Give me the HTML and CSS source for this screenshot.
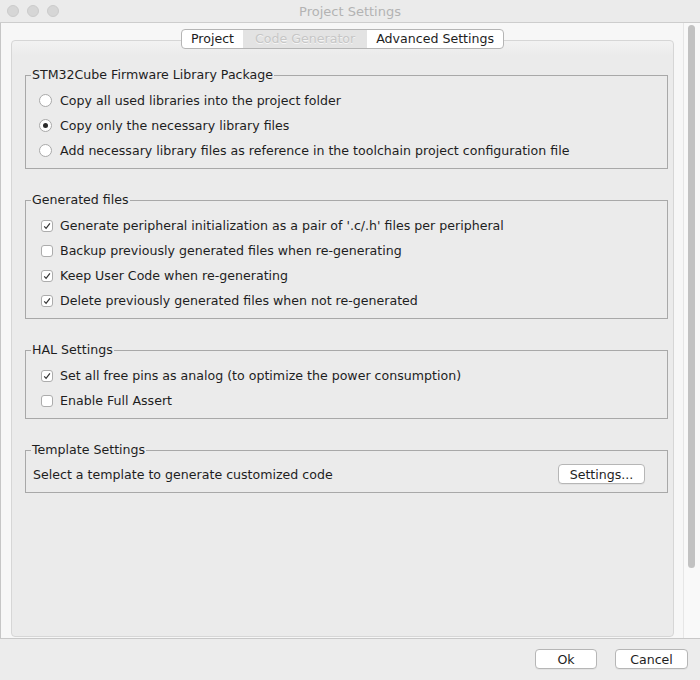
FILE: index.html
```html
<!DOCTYPE html>
<html>
<head>
<meta charset="utf-8">
<title>Project Settings</title>
<link rel="stylesheet" href="styles.css">
</head>
<body>
<div class="window">
  <div class="titlebar">
    <div class="lights"><span class="light"></span><span class="light"></span><span class="light"></span></div>
    <div class="title">Project Settings</div>
    <div></div>
  </div>
  <div class="main">
    <div class="viewport">
      <div class="tabs">
        <div class="tab">Project</div>
        <div class="tab disabled">Code Generator</div>
        <div class="tab">Advanced Settings</div>
      </div>
      <div class="panel">
        <fieldset class="group">
          <legend>STM32Cube Firmware Library Package</legend>
          <div class="row"><span class="ind"><span class="radio"></span></span>Copy all used libraries into the project folder</div>
          <div class="row"><span class="ind"><span class="radio on"></span></span>Copy only the necessary library files</div>
          <div class="row"><span class="ind"><span class="radio"></span></span>Add necessary library files as reference in the toolchain project configuration file</div>
        </fieldset>
        <fieldset class="group">
          <legend>Generated files</legend>
          <div class="row"><span class="ind"><span class="check"><svg viewBox="0 0 12 12" width="12" height="12"><path d="M3.2 6.3 L5.1 8.4 L8.9 3.4"/></svg></span></span>Generate peripheral initialization as a pair of '.c/.h' files per peripheral</div>
          <div class="row"><span class="ind"><span class="check"></span></span>Backup previously generated files when re-generating</div>
          <div class="row"><span class="ind"><span class="check"><svg viewBox="0 0 12 12" width="12" height="12"><path d="M3.2 6.3 L5.1 8.4 L8.9 3.4"/></svg></span></span>Keep User Code when re-generating</div>
          <div class="row"><span class="ind"><span class="check"><svg viewBox="0 0 12 12" width="12" height="12"><path d="M3.2 6.3 L5.1 8.4 L8.9 3.4"/></svg></span></span>Delete previously generated files when not re-generated</div>
        </fieldset>
        <fieldset class="group">
          <legend>HAL Settings</legend>
          <div class="row"><span class="ind"><span class="check"><svg viewBox="0 0 12 12" width="12" height="12"><path d="M3.2 6.3 L5.1 8.4 L8.9 3.4"/></svg></span></span>Set all free pins as analog (to optimize the power consumption)</div>
          <div class="row"><span class="ind"><span class="check"></span></span>Enable Full Assert</div>
        </fieldset>
        <fieldset class="group template">
          <legend>Template Settings</legend>
          <div class="row trow"><span>Select a template to generate customized code</span><button class="btn settings">Settings...</button></div>
        </fieldset>
      </div>
    </div>
    <div class="scrollbar"><div class="thumb"></div></div>
  </div>
  <div class="footer">
    <button class="btn ok">Ok</button>
    <button class="btn cancel">Cancel</button>
  </div>
</div>
</body>
</html>
```
FILE: styles.css
```css
* { box-sizing: border-box; }
html, body { margin: 0; padding: 0; }
body {
  width: 700px;
  height: 680px;
  overflow: hidden;
  background: #ececec;
  font-family: "DejaVu Sans", sans-serif;
  font-size: 12.6px;
  color: #1e1e1e;
}
.window { display: flex; flex-direction: column; height: 680px; }
.titlebar {
  height: 23px;
  flex: none;
  display: grid;
  grid-template-columns: 1fr auto 1fr;
  align-items: center;
  background: #ebebeb;
  border-bottom: 1px solid #cdcdcd;
}
.lights { display: flex; gap: 8px; padding-left: 7px; }
.light {
  width: 12px; height: 12px; border-radius: 50%;
  background: #d6d6d6; border: 1px solid #cbcbcb;
}
.title { color: #b3b3b3; font-size: 13px; }
.main {
  flex: none;
  height: 616px;
  display: flex;
  border-bottom: 1px solid #c8c8c8;
}
.viewport {
  flex: 1;
  display: flex;
  flex-direction: column;
  padding: 6px 9px 1px 10px;
  background: #f7f7f7;
  border-left: 1px solid #c6c6c6;
}
.tabs {
  align-self: center;
  display: flex;
  height: 20px;
  margin-bottom: -9px;
  position: relative;
  z-index: 1;
  background: #fff;
  border: 1px solid #b5b5b5;
  border-radius: 4px;
  overflow: hidden;
}
.tab { padding: 0 9px; line-height: 18px; color: #1e1e1e; }
.tab.disabled {
  padding: 0 12px;
  background: #e3e3e3;
  color: #c6c6c6;
  text-shadow: 0 1px 0 #f6f6f6;
}
.panel {
  flex: 1;
  border: 1px solid #d6d6d6;
  border-radius: 4px;
  background: linear-gradient(#f2f2f2, #ebebeb 14px);
  padding: 26px 5px 0 13px;
}
.group {
  margin: 0;
  min-width: 0;
  padding: 5px 0 5px;
  border: 1px solid #a8a8a8;
}
.group + .group { margin-top: 23px; }
.group legend {
  margin-left: 5px;
  padding: 0 1px;
  line-height: 16px;
}
.row {
  height: 25px;
  display: flex;
  align-items: center;
  gap: 7px;
  padding-left: 13px;
  white-space: nowrap;
}
.ind { width: 14px; display: flex; align-items: center; }
.radio {
  width: 13px; height: 13px; border-radius: 50%;
  background: #fff;
  border: 1px solid #a9a9a9;
  display: flex; align-items: center; justify-content: center;
}
.radio.on::after {
  content: "";
  width: 5px; height: 5px; border-radius: 50%;
  background: #2b2b2b;
}
.check {
  margin-left: 2px;
  width: 12px; height: 12px; border-radius: 3px;
  background: #fff;
  border: 1px solid #acacac;
  position: relative;
}
.check svg { position: absolute; left: -1px; top: -1px; }
.check path { fill: none; stroke: #333; stroke-width: 1.2; }
.group.template { padding: 3px 0 5px; }
.trow {
  height: 26px;
  justify-content: space-between;
  padding: 0 22px 0 7px;
}
.btn {
  font-family: inherit;
  font-size: 12.6px;
  color: #1e1e1e;
  height: 20px;
  padding: 0;
  background: #fff;
  border: 1px solid #b6b6b6;
  border-radius: 4px;
  box-shadow: 0 1px 0 rgba(0,0,0,0.04);
}
.settings { width: 87px; }
.ok { width: 62px; }
.cancel { width: 73px; }
.scrollbar {
  flex: none;
  width: 17px;
  background: #f9f9f9;
  border-left: 1px solid #e6e6e6;
  padding: 2px 0 0 4px;
}
.thumb { width: 7px; height: 543px; border-radius: 4px; background: #c2c2c2; }
.footer {
  flex: 1;
  display: flex;
  justify-content: flex-end;
  align-items: flex-start;
  gap: 18px;
  padding: 10px 12px 0 0;
  background: #ececec;
}
```
